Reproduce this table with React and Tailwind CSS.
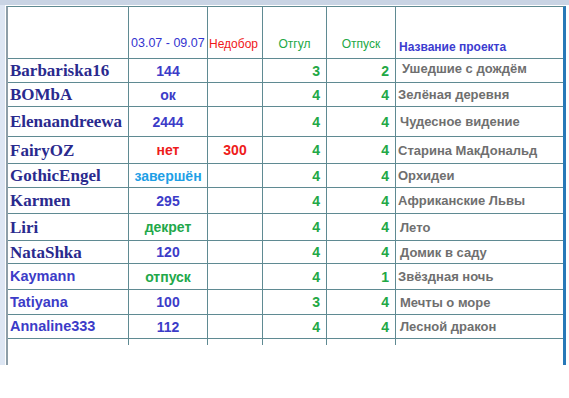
import React from "react";

const rows = [
  { name: "Barbariska16", serif: true, val: "144", vc: "text-[#3c3cc8]", ned: "", a: "3", b: "2", p: "Ушедшие с дождём", pp: "pl-[6px] pb-[4px]", h: "h-[24px]" },
  { name: "BOMbA", serif: true, val: "ок", vc: "text-[#3c3cc8]", ned: "", a: "4", b: "4", p: "Зелёная деревня", pp: "pl-[2px]", h: "h-[24px]" },
  { name: "Elenaandreewa", serif: true, val: "2444", vc: "text-[#3c3cc8]", ned: "", a: "4", b: "4", p: "Чудесное видение", pp: "pl-[4px]", h: "h-[30px]" },
  { name: "FairyOZ", serif: true, val: "нет", vc: "text-[#ee1c1c]", ned: "300", a: "4", b: "4", p: "Старина МакДональд", pp: "pl-[2px]", h: "h-[27px]" },
  { name: "GothicEngel", serif: true, val: "завершён", vc: "text-[#1ea0e6]", ned: "", a: "4", b: "4", p: "Орхидеи", pp: "pl-[2px]", h: "h-[24px]" },
  { name: "Karmen", serif: true, val: "295", vc: "text-[#3c3cc8]", ned: "", a: "4", b: "4", p: "Африканские Львы", pp: "pl-[2px]", h: "h-[26px]" },
  { name: "Liri", serif: true, val: "декрет", vc: "text-[#22a84a]", ned: "", a: "4", b: "4", p: "Лето", pp: "pl-[4px]", h: "h-[27px]" },
  { name: "NataShka", serif: true, val: "120", vc: "text-[#3c3cc8]", ned: "", a: "4", b: "4", p: "Домик в саду", pp: "pl-[4px]", h: "h-[23px]" },
  { name: "Kaymann", serif: false, val: "отпуск", vc: "text-[#22a84a]", ned: "", a: "4", b: "1", p: "Звёздная ночь", pp: "pl-[2px]", h: "h-[26px]" },
  { name: "Tatiyana", serif: false, val: "100", vc: "text-[#3c3cc8]", ned: "", a: "3", b: "4", p: "Мечты о море", pp: "pl-[4px]", h: "h-[25px]" },
  { name: "Annaline333", serif: false, val: "112", vc: "text-[#3c3cc8]", ned: "", a: "4", b: "4", p: "Лесной дракон", pp: "pl-[4px]", h: "h-[24px]" },
];

const cols = "grid grid-cols-[121px_79px_55px_64px_69px_166px]";
const line = "border-[#5f8a92]";

export default function App() {
  return (
    <div className="w-[569px] h-[398px] bg-white flex flex-col overflow-hidden font-['Liberation_Sans',Arial,sans-serif]">
      <div className="h-[5px] w-full bg-[#c9d4e4] shrink-0" />
      <div className="flex">
        <div className="w-[5px] h-[360px] bg-[#dde6f3] shrink-0" />
        <div className={`ml-[1px] mt-[1px] border-l-2 border-l-[#8d9ea8] border-t ${line} border-r-[3px] border-r-[#2879b8] w-[560px]`}>
          {/* header */}
          <div className={`${cols} h-[52px] border-b ${line}`}>
            <div className={`border-r ${line}`} />
            <div className={`border-r ${line} flex items-end pb-[9px] pl-[2px] text-[12.5px] text-[#3434d0] leading-none`}>03.07 - 09.07</div>
            <div className={`border-r ${line} flex items-end pb-[8px] pl-[1px] text-[12px] text-[#f01818] leading-none`}>Недобор</div>
            <div className={`border-r ${line} flex items-end justify-center pb-[8px] text-[12px] text-[#22a845] leading-none`}>Отгул</div>
            <div className={`border-r ${line} flex items-end justify-center pb-[8px] text-[12px] text-[#22a845] leading-none`}>Отпуск</div>
            <div className="flex items-end pb-[5px] pl-[3px] text-[12px] font-bold text-[#3c3cd0] leading-none">Название проекта</div>
          </div>
          {rows.map((r, i) => (
            <div key={i} className={`${cols} ${r.h} border-b ${line}`}>
              <div className={`border-r ${line} flex items-center pl-[2px] leading-none`}>
                {r.serif ? (
                  <span className="font-['Liberation_Serif',serif] font-bold text-[17px] text-[#2a2a8e]">{r.name}</span>
                ) : (
                  <span className="font-bold text-[14.5px] text-[#3c3cc8]">{r.name}</span>
                )}
              </div>
              <div className={`border-r ${line} flex items-center justify-center font-bold text-[14px] leading-none ${r.vc}`}>{r.val}</div>
              <div className={`border-r ${line} flex items-center justify-center font-bold text-[14px] leading-none text-[#ee1c1c]`}>{r.ned}</div>
              <div className={`border-r ${line} flex items-center justify-end pr-[6px] font-bold text-[14px] leading-none text-[#22a845]`}>{r.a}</div>
              <div className={`border-r ${line} flex items-center justify-end pr-[6px] font-bold text-[14px] leading-none text-[#22a845]`}>{r.b}</div>
              <div className={`flex items-center ${r.pp} font-bold text-[13px] leading-none text-[#6f6f6f]`}>{r.p}</div>
            </div>
          ))}
          <div className={`${cols} h-[6px]`}>
            <div className={`border-r ${line}`} />
            <div className={`border-r ${line}`} />
            <div className={`border-r ${line}`} />
            <div className={`border-r ${line}`} />
            <div className={`border-r ${line}`} />
            <div />
          </div>
        </div>
      </div>
    </div>
  );
}
